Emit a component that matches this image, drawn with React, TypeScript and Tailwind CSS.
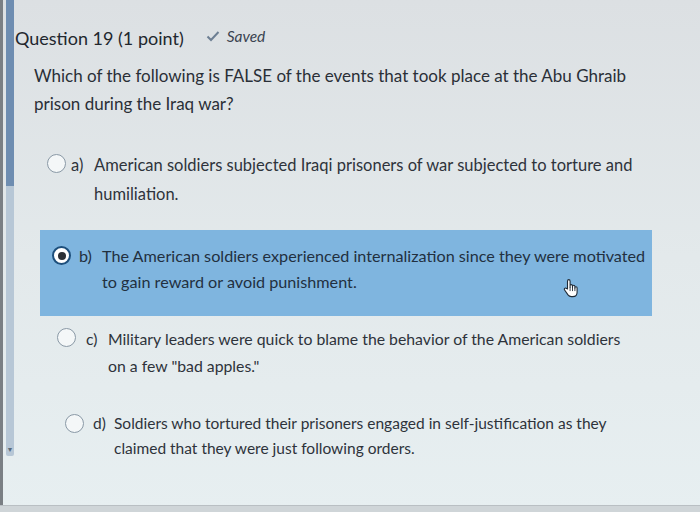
import React from "react";

function Radio({ checked }: { checked?: boolean }) {
  return (
    <div
      className={
        "shrink-0 w-[19px] h-[19px] rounded-full flex items-center justify-center " +
        (checked
          ? "border-[2.5px] border-[#1d4f7c] bg-white"
          : "border-[1.5px] border-[#8a99a6] bg-[#f4f7f8]")
      }
    >
      {checked && <div className="w-[8px] h-[8px] rounded-full bg-[#2c3036]" />}
    </div>
  );
}

function HandCursor() {
  return (
    <svg width="18" height="20" viewBox="0 0 18 20" className="absolute left-[562px] top-[278px]">
      <path
        d="M5.5 11V3.2c0-1 .6-1.6 1.3-1.6s1.3.6 1.3 1.6V9.5V8c0-.9.6-1.4 1.2-1.4s1.2.5 1.2 1.4v1.5-.9c0-.9.6-1.3 1.2-1.3s1.2.4 1.2 1.3v1.3c0-.8.6-1.2 1.1-1.2s1.1.4 1.1 1.2v4.3c0 2.6-1.8 4.4-4.4 4.4H9.3c-1.5 0-2.5-.6-3.3-1.7L2.6 12c-.5-.7-.3-1.5.3-1.8.6-.4 1.3-.2 1.8.4z"
        fill="#ffffff"
        stroke="#1f2a36"
        strokeWidth="1.1"
        strokeLinejoin="round"
      />
      <path d="M8.1 9.5v3.6M10.5 9.5v3.6M12.9 9.8v3.3" stroke="#1f2a36" strokeWidth="0.9" />
    </svg>
  );
}

export default function App() {
  return (
    <div
      className="relative w-[700px] h-[512px] overflow-hidden bg-gradient-to-b from-[#dce0e3] via-[#e3e9eb] to-[#e7eff1] text-[#2e333b]"
      style={{ fontFamily: "Lato, 'Open Sans', sans-serif" }}
    >
      {/* left dark edge */}
      <div className="absolute left-0 top-0 h-full w-[3px] bg-[#7a7f84]" />
      {/* scrollbar */}
      <div className="absolute left-[6px] top-0 w-[8px] h-[456px] bg-[#b7c7d6] rounded-b-[2px] flex flex-col">
        <div className="h-[186px] bg-[#6e8db1]" />
        <div className="flex-1" />
        <div className="text-[#5b6b7b] text-[7px] leading-none text-center pb-[3px]">▼</div>
      </div>
      {/* bottom line */}
      <div className="absolute left-0 bottom-0 w-full h-[7px] bg-[#cfd5d8] border-t border-[#b9bfc3]" />

      <div className="pl-[15px] pt-[25px]">
        <div className="flex items-baseline">
          <span className="text-[18px] text-[#22272e]">Question 19 (1 point)</span>
          <span className="ml-[22px] flex items-baseline text-[#3a4350] relative top-[-3px]">
            <svg width="14" height="11" viewBox="0 0 14 11" className="mr-[7px] self-center">
              <path d="M1.5 5.5l3.5 3.5 7.5-8" stroke="#6d7f93" strokeWidth="2" fill="none" />
            </svg>
            <span className="italic text-[15.5px]">Saved</span>
          </span>
        </div>

        <div className="ml-[19px] mt-[10px] text-[17px] leading-[28px] text-[#2a2f37] w-[630px]">
          Which of the following is FALSE of the events that took place at the Abu Ghraib prison during the Iraq war?
        </div>
      </div>

      {/* option a */}
      <div className="ml-[47px] mt-[33px] flex items-start">
        <div className="pt-[3px]"><Radio /></div>
        <div className="ml-[5px] flex text-[16.5px] leading-[29px]">
          <span className="w-[23px] shrink-0">a)</span>
          <span className="w-[560px]">American soldiers subjected Iraqi prisoners of war subjected to torture and humiliation.</span>
        </div>
      </div>

      {/* option b */}
      <div className="ml-[40px] mt-[21px] w-[612px] h-[86px] bg-[#7fb5df] pt-[13px] pl-[12px] flex items-start relative">
        <div className="pt-[3px]"><Radio checked /></div>
        <div className="ml-[8px] flex text-[16.2px] leading-[26px] text-[#22303f]">
          <span className="w-[23px] shrink-0">b)</span>
          <span className="w-[550px]">The American soldiers experienced internalization since they were motivated to gain reward or avoid punishment.</span>
        </div>
      </div>
      <HandCursor />

      {/* option c */}
      <div className="ml-[57px] mt-[9px] flex items-start">
        <div className="pt-[3px]"><Radio /></div>
        <div className="ml-[10px] flex text-[15.8px] leading-[27px]">
          <span className="w-[22px] shrink-0">c)</span>
          <span className="w-[522px]">Military leaders were quick to blame the behavior of the American soldiers on a few "bad apples."</span>
        </div>
      </div>

      {/* option d */}
      <div className="ml-[65px] mt-[32px] flex items-start">
        <div className="pt-[3px]"><Radio /></div>
        <div className="ml-[9px] flex text-[15.5px] leading-[25px]">
          <span className="w-[21px] shrink-0">d)</span>
          <span className="w-[500px]">Soldiers who tortured their prisoners engaged in self-justification as they claimed that they were just following orders.</span>
        </div>
      </div>
    </div>
  );
}
